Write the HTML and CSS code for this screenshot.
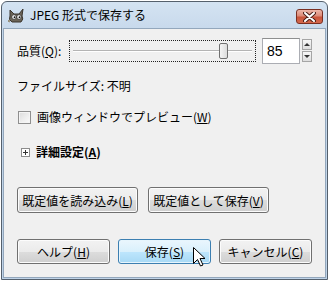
FILE: index.html
```html
<!DOCTYPE html>
<html lang="ja">
<head>
  <meta charset="UTF-8">
  <title>JPEG 形式で保存する</title>
  <link rel="stylesheet" href="styles.css">
</head>
<body>
  <div class="window">
    <div class="titlebar">
      <svg class="app-icon" width="17" height="16" viewBox="0 0 17 16">
        <path d="M2 2 L6 6 L11 6 L15 1 L14 8 Q16 11 13 14 L4 14 Q0 12 2 8 Z" fill="#6b6458" stroke="#3a352e" stroke-width="1"/>
        <circle cx="6" cy="9" r="2.2" fill="#fff" stroke="#222" stroke-width="0.6"/>
        <circle cx="11" cy="9" r="2.2" fill="#fff" stroke="#222" stroke-width="0.6"/>
        <circle cx="6.5" cy="9.2" r="0.9" fill="#111"/>
        <circle cx="11.5" cy="9.2" r="0.9" fill="#111"/>
        <path d="M2 12 L0 13 L2 14" fill="none" stroke="#8a7d60" stroke-width="1"/>
      </svg>
      <span class="title">JPEG 形式で保存する</span>
      <div class="close-btn">
        <svg width="13" height="10" viewBox="0 0 13 10">
          <path d="M2 1 L11 9 M11 1 L2 9" stroke="#4a1f18" stroke-width="4" stroke-linecap="round"/>
          <path d="M2 1 L11 9 M11 1 L2 9" stroke="#fff" stroke-width="2" stroke-linecap="round"/>
        </svg>
      </div>
    </div>
    <div class="content">
      <div class="quality-row">
        <span class="q-label">品質(<u>Q</u>):</span>
        <div class="slider">
          <div class="thumb" style="margin-left: 149px"></div>
        </div>
        <div class="spin">
          <div class="spin-entry">85</div>
          <div class="spin-btns">
            <div class="spin-btn"><span class="arrow-up"></span></div>
            <div class="spin-btn"><span class="arrow-down"></span></div>
          </div>
        </div>
      </div>
      <div class="filesize">ファイルサイズ: 不明</div>
      <div class="check-row">
        <span class="checkbox"></span>
        <span>画像ウィンドウでプレビュー(<u>W</u>)</span>
      </div>
      <div class="expander">
        <span class="exp-box"></span>
        <span class="exp-label">詳細設定(<u>A</u>)</span>
      </div>
      <div class="defaults-row">
        <button class="btn wide">既定値を読み込み(<u>L</u>)</button>
        <button class="btn wide">既定値として保存(<u>V</u>)</button>
      </div>
      <div class="actions-row">
        <button class="btn">ヘルプ(<u>H</u>)</button>
        <button class="btn hot">保存(<u>S</u>)</button>
        <button class="btn">キャンセル(<u>C</u>)</button>
      </div>
    </div>
    <svg class="cursor" width="13" height="20" viewBox="0 0 13 20">
      <path d="M0.5 0.5 L0.5 16.5 L4.5 12.5 L7.5 19 L10 18 L7 11.5 L12 11.5 Z" fill="#fff" stroke="#000" stroke-width="1" stroke-linejoin="miter"/>
    </svg>
  </div>
</body>
</html>
```

FILE: styles.css
```css
body { margin: 0; background: #fff; font-family: "Noto Sans CJK JP", "Noto Sans", sans-serif; font-size: 12px; color: #000; }
u { text-decoration: underline; text-underline-offset: 1px; }

.window { position: relative; margin: 1px 0 0 1px; width: 327px; height: 279px; box-sizing: border-box; border: 1px solid #55606c; border-radius: 6px 6px 0 0; background: linear-gradient(#d4e3f2, #c6d8eb 30px, #bfd3e8); padding: 0 1px 1px 1px; display: flex; flex-direction: column; }

.titlebar { height: 26px; display: flex; align-items: center; padding: 0 2px 0 5px; }
.app-icon { flex: none; margin-top: 1px; }
.title { margin-left: 5px; font-size: 12px; line-height: 16px; color: #000; flex: 1; }
.close-btn { width: 27px; height: 15px; box-sizing: border-box; border: 1px solid #7a2f22; border-radius: 3px; background: linear-gradient(#edb6a9, #dc8b78 45%, #c9543b 55%, #d46a4f); display: flex; align-items: center; justify-content: center; margin-top: 3px; margin-right: 1px; }

.content { flex: 1; background: #f0f0f0; border: 1px solid #93a7bc; padding: 0 13px; display: flex; flex-direction: column; }

.quality-row { display: flex; align-items: center; margin-top: 8px; height: 27px; }
.q-label { width: 53px; line-height: 16px; }
.slider { width: 190px; height: 22px; box-sizing: border-box; border: 1px dotted #222; display: flex; align-items: center; background: linear-gradient(#f0f0f0 9px, #b4b4b4 9px, #b4b4b4 10px, #fff 10px, #fff 11px, #f0f0f0 11px); background-size: calc(100% - 6px) 100%; background-position: 3px 0; background-repeat: no-repeat; }
.thumb { width: 9px; height: 16px; box-sizing: border-box; border: 1px solid #707070; border-radius: 2px; background: linear-gradient(90deg, #f4f4f4, #dcdcdc); }
.spin { display: flex; margin-left: 6px; height: 26px; }
.spin-entry { width: 38px; box-sizing: border-box; border: 1px solid #abadb3; border-top-color: #8e8f8f; background: #fff; font-family: "Liberation Sans", sans-serif; font-size: 14px; padding: 4px 0 0 4px; }
.spin-btns { display: flex; flex-direction: column; margin: 1px 0 0 2px; gap: 1px; }
.spin-btn { width: 10px; height: 11px; box-sizing: border-box; border: 1px solid #a5a5a5; background: linear-gradient(#f7f7f7, #dedede); display: flex; align-items: center; justify-content: center; }
.arrow-up { width: 0; height: 0; border-left: 3px solid transparent; border-right: 3px solid transparent; border-bottom: 3px solid #333; }
.arrow-down { width: 0; height: 0; border-left: 3px solid transparent; border-right: 3px solid transparent; border-top: 3px solid #333; }

.filesize { margin-top: 14px; line-height: 16px; }

.check-row { display: flex; align-items: center; margin-top: 15px; line-height: 16px; }
.checkbox { width: 13px; height: 13px; box-sizing: border-box; border: 1px solid #8f8f8f; background: linear-gradient(135deg, #dcdcdc, #fbfbfb); box-shadow: inset 0 0 0 1px #f4f4f4; margin: 0 6px 0 1px; }

.expander { display: flex; align-items: center; margin-top: 19px; line-height: 16px; }
.exp-box { width: 9px; height: 9px; box-sizing: border-box; border: 1px solid #8c8c8c; background: linear-gradient(#333, #333) center / 5px 1px no-repeat, linear-gradient(#333, #333) center / 1px 5px no-repeat, #fff; margin: 0 6px 0 4px; }
.exp-label { font-weight: bold; font-size: 12px; }

.btn { font-family: inherit; font-size: 12px; color: #000; height: 26px; padding: 0; margin: 0; box-sizing: border-box; border: 1px solid #707070; border-radius: 3px; background: linear-gradient(#f2f2f2, #ebebeb 50%, #dddddd 50%, #cfcfcf); box-shadow: inset 0 0 0 1px #fcfcfc; }
.defaults-row { display: flex; gap: 10px; margin-top: 27px; }
.btn.wide { width: 121px; }
.actions-row { display: flex; gap: 8px; margin-top: 26px; }
.actions-row .btn { width: 94px; height: 25px; }
.btn.hot { border-color: #3c7fb1; background: linear-gradient(#eaf6fd, #d9f0fc 50%, #bee6fd 50%, #a7d9f5); box-shadow: inset 0 0 0 1px #e6f5fd; }

.cursor { position: absolute; left: 191px; top: 245px; }
```
